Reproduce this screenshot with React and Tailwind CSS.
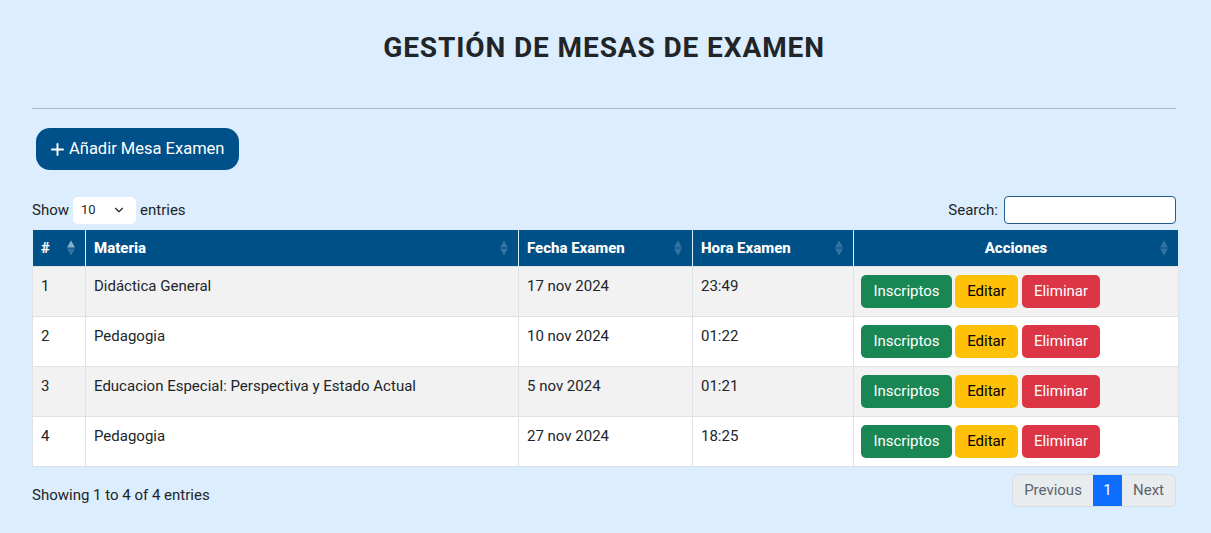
import { Plus, ChevronDown } from "lucide-react";

const mesas = [
  { id: 1, materia: "Didáctica General", fecha: "17 nov 2024", hora: "23:49" },
  { id: 2, materia: "Pedagogia", fecha: "10 nov 2024", hora: "01:22" },
  { id: 3, materia: "Educacion Especial: Perspectiva y Estado Actual", fecha: "5 nov 2024", hora: "01:21" },
  { id: 4, materia: "Pedagogia", fecha: "27 nov 2024", hora: "18:25" },
];

// little up/down arrows DataTables draws in each header
const SortIcon = ({ active }) => (
  <span className="absolute right-[10px] top-1/2 flex -translate-y-1/2 flex-col items-center gap-[1px]">
    <span
      className={`h-0 w-0 border-x-[4px] border-b-[7px] border-x-transparent ${
        active ? "border-b-white/55" : "border-b-white/20"
      }`}
    />
    <span className="h-0 w-0 border-x-[4px] border-t-[7px] border-x-transparent border-t-white/20" />
  </span>
);

const columns = [
  { label: "#", w: "w-[53px]", active: true },
  { label: "Materia", w: "w-[433px]" },
  { label: "Fecha Examen", w: "w-[174px]" },
  { label: "Hora Examen", w: "w-[161px]" },
  { label: "Acciones", w: "w-[325px]", center: true },
];

const App = () => {
  return (
    <div className="min-h-[533px] bg-[#dcedfd] font-['Roboto',sans-serif] text-[#212529]">
      <div className="ml-[32px] w-[1144px]">
        <h1 className="pt-[29px] text-center text-[28px] font-bold leading-[38px] tracking-[0.9px] text-[#212529]">
          GESTIÓN DE MESAS DE EXAMEN
        </h1>
        <hr className="mt-[41px] border-0 border-t border-[#a9bac9]" />

        <button
          type="button"
          className="ml-[4px] mt-[19px] flex h-[42px] w-[203px] items-center gap-[2px] rounded-[14px] bg-[#00508a] pl-[12px] text-[16.5px] text-white"
        >
          <Plus size={19} strokeWidth={2.4} />
          Añadir Mesa Examen
        </button>

        <div className="mt-[26px] flex items-center justify-between text-[15px]">
          <div className="flex items-center gap-[4px]">
            <span>Show</span>
            <div className="flex h-[27px] w-[63px] items-center justify-between rounded-[5px] bg-white pl-[8px] pr-[10px] text-[13px]">
              <span>10</span>
              <ChevronDown size={14} strokeWidth={2} />
            </div>
            <span>entries</span>
          </div>
          <div className="flex items-center gap-[6px]">
            <span>Search:</span>
            <input
              type="text"
              className="h-[28px] w-[172px] rounded-[4px] border border-[#1f5f8f] bg-white outline-none"
            />
          </div>
        </div>

        <table className="mt-[6px] w-[1146px] table-fixed border-collapse text-[15px]">
          <thead>
            <tr className="h-[36px] bg-[#005088] text-white">
              {columns.map((c) => (
                <th
                  key={c.label}
                  className={`relative border-x border-[#dcedfd]/70 px-2 font-extrabold ${c.w} ${
                    c.center ? "text-center" : "text-left"
                  }`}
                >
                  {c.label}
                  <SortIcon active={c.active} />
                </th>
              ))}
            </tr>
          </thead>
          <tbody>
            {mesas.map((m, i) => (
              <tr key={m.id} className={i % 2 === 0 ? "bg-[#f2f2f2]" : "bg-white"}>
                <td className="h-[50px] border border-[#dee2e6] px-2 pb-[16px] pt-[8px] align-top">{m.id}</td>
                <td className="border border-[#dee2e6] px-2 pt-[8px] align-top">{m.materia}</td>
                <td className="border border-[#dee2e6] px-2 pt-[8px] align-top">{m.fecha}</td>
                <td className="border border-[#dee2e6] px-2 pt-[8px] align-top">{m.hora}</td>
                <td className="border border-[#dee2e6] pl-[7px] pr-2 align-middle">
                  <div className="flex gap-[3px] text-[15px]">
                    <button type="button" className="h-[33px] w-[91px] rounded-[5px] bg-[#198754] text-white">
                      Inscriptos
                    </button>
                    <button type="button" className="h-[33px] w-[63px] rounded-[5px] bg-[#ffc107] text-black">
                      Editar
                    </button>
                    <button type="button" className="ml-[1px] h-[33px] w-[78px] rounded-[5px] bg-[#dc3545] text-white">
                      Eliminar
                    </button>
                  </div>
                </td>
              </tr>
            ))}
          </tbody>
        </table>

        <div className="mt-[7px] flex items-center justify-between">
          <span className="pt-[10px] text-[15px]">Showing 1 to 4 of 4 entries</span>
          <div className="flex h-[33px] overflow-hidden rounded-[6px] border border-[#d5dce3] bg-[#e9ecef] text-[15px] text-[#5c636a]">
            <span className="flex w-[80px] items-center justify-center">Previous</span>
            <span className="flex w-[29px] items-center justify-center bg-[#0d6efd] text-white">1</span>
            <span className="flex w-[53px] items-center justify-center">Next</span>
          </div>
        </div>
      </div>
    </div>
  );
};

export default App;
